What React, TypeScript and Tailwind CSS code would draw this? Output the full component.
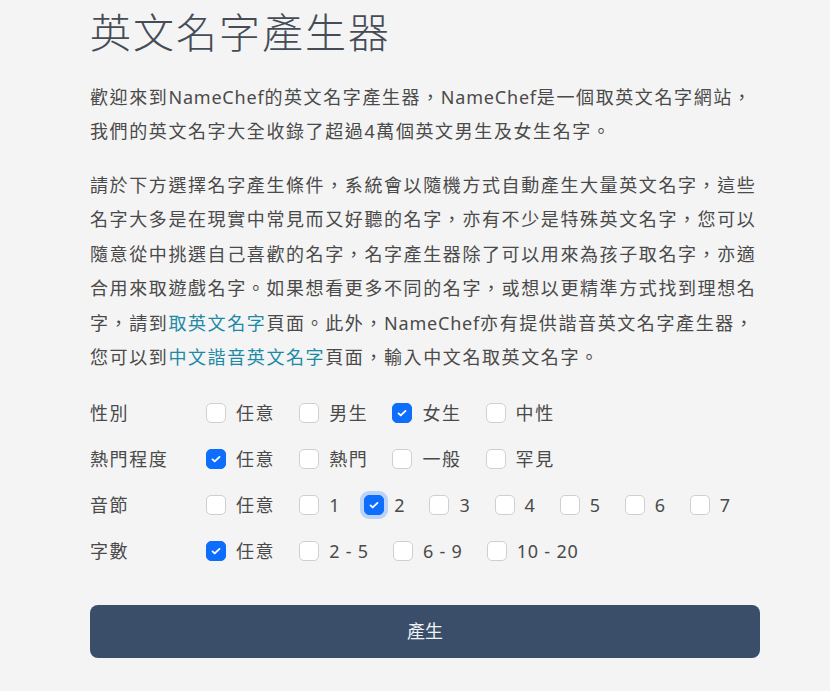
import { useState } from "react";

const groups = [
  { label: "性別", options: ["任意", "男生", "女生", "中性"], checked: ["女生"] },
  { label: "熱門程度", options: ["任意", "熱門", "一般", "罕見"], checked: ["任意"] },
  { label: "音節", options: ["任意", "1", "2", "3", "4", "5", "6", "7"], checked: ["2"] },
  { label: "字數", options: ["任意", "2 - 5", "6 - 9", "10 - 20"], checked: ["任意"] },
];

const Check = ({ on, focus }: { on: boolean; focus?: boolean }) => (
  <span
    className={`flex h-[20px] w-[20px] shrink-0 items-center justify-center rounded-[5px] border ${
      on ? "border-[#0d6efd] bg-[#0d6efd]" : "border-[#cfcfcf] bg-white"
    } ${focus ? "ring-4 ring-[#0d6efd]/25" : ""}`}
  >
    {on ? (
      <svg viewBox="0 0 20 20" className="h-[14px] w-[14px]">
        <path d="M5 10.5l3.2 3L15 7" fill="none" stroke="white" strokeWidth="2.6" strokeLinecap="round" strokeLinejoin="round" />
      </svg>
    ) : null}
  </span>
);

const Latin = ({ children }: { children: React.ReactNode }) => (
  <span className="tracking-[0.8px]">{children}</span>
);

export default function App() {
  const [state, setState] = useState(groups.map((g) => g.checked));

  const toggle = (gi: number, opt: string) => {
    setState((s) =>
      s.map((c, i) => (i === gi ? (c.includes(opt) ? c.filter((o) => o !== opt) : [...c, opt]) : c))
    );
  };

  return (
    <div
      className="min-h-[691px] bg-[#f4f4f4] text-[#4a4a4a]"
      style={{ fontFamily: '"Noto Sans", "Noto Sans CJK TC", sans-serif' }}
    >
      <div className="w-[670px] ml-[90px] pt-[7px]">
        <h1 className="text-[41px] leading-[50px] font-light tracking-[2px] text-[#454c56]">英文名字產生器</h1>

        <p className="mt-[23px] text-[18px] leading-[34px] tracking-[1.6px]">
          歡迎來到<Latin>NameChef</Latin>的英文名字產生器，<Latin>NameChef</Latin>是一個取英文名字網站，我們的英文名字大全收錄了超過4萬個英文男生及女生名字。
        </p>

        <p className="mt-[20px] text-[18px] leading-[34.4px] tracking-[1.6px]">
          請於下方選擇名字產生條件，系統會以隨機方式自動產生大量英文名字，這些名字大多是在現實中常見而又好聽的名字，亦有不少是特殊英文名字，您可以隨意從中挑選自己喜歡的名字，名字產生器除了可以用來為孩子取名字，亦適合用來取遊戲名字。如果想看更多不同的名字，或想以更精準方式找到理想名字，請到
          <a className="text-[#1c8aa6]">取英文名字</a>
          頁面。此外，<Latin>NameChef</Latin>亦有提供諧音英文名字產生器，您可以到
          <a className="text-[#1c8aa6]">中文諧音英文名字</a>
          頁面，輸入中文名取英文名字。
        </p>

        <div className="mt-[16px] flex flex-col">
          {groups.map((g, gi) => (
            <div key={g.label} className="flex h-[46px] items-center text-[18px] tracking-[1.6px]">
              <div className="w-[116px] shrink-0">{g.label}</div>
              <div className="flex items-center gap-x-[24px]">
                {g.options.map((opt) => (
                  <label
                    key={opt}
                    className="flex cursor-pointer items-center gap-[10px]"
                    onClick={() => toggle(gi, opt)}
                  >
                    <Check on={state[gi].includes(opt)} focus={gi === 2 && opt === "2"} />
                    <span className={/[0-9]/.test(opt) ? "tracking-[0.8px]" : ""}>{opt}</span>
                  </label>
                ))}
              </div>
            </div>
          ))}
        </div>

        <button className="mt-[31px] h-[53px] w-full rounded-[8px] bg-[#3a4e69] text-[18px] text-[#eef1f5]">
          產生
        </button>
      </div>
    </div>
  );
}
